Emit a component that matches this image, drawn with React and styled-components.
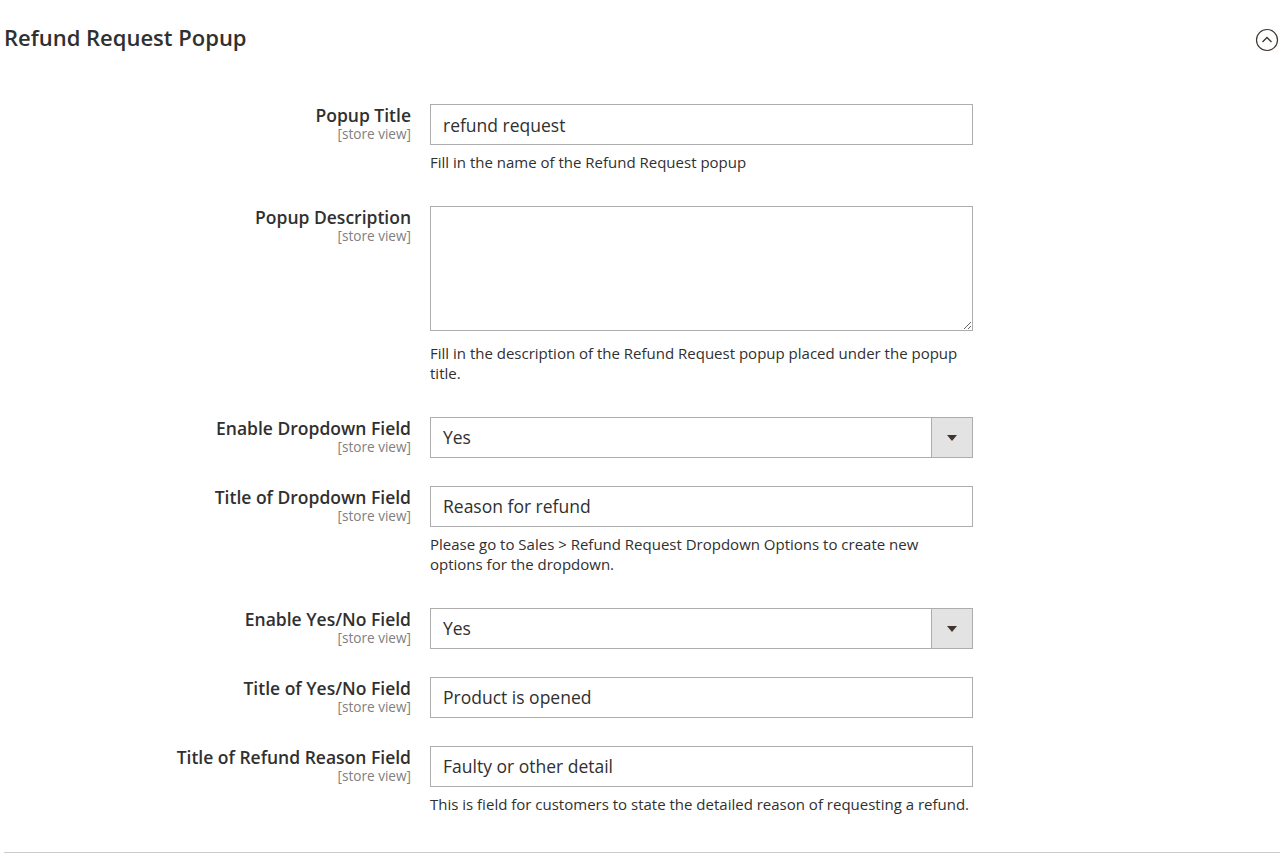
import React from "react";
import styled, { createGlobalStyle } from "styled-components";

const Global = createGlobalStyle`
  html, body { margin: 0; padding: 0; background: #fff; }
  body { font-family: "Open Sans", "Liberation Sans", sans-serif; color: #303030; }
  * { box-sizing: border-box; }
`;

const Section = styled.section`
  margin-left: 4px;
  border-bottom: 1px solid #cccccc;
  padding-bottom: 18px;
`;

const Header = styled.div`
  display: flex;
  align-items: center;
  justify-content: space-between;
  height: 78px;
`;

const Title = styled.h2`
  margin: 0 0 5px;
  font-size: 22px;
  line-height: 28px;
  font-weight: 600;
  color: #303030;
`;

const Toggle = styled.button`
  border: 0;
  background: none;
  padding: 0;
  width: 24px;
  height: 24px;
  display: flex;
  align-items: center;
  justify-content: center;
  margin-right: 1px;
  margin-top: 2px;
  cursor: pointer;
`;

const Form = styled.div`
  display: grid;
  grid-template-columns: 407px 543px;
  column-gap: 19px;
  padding-top: 12px;
`;

const Row = styled.div`
  display: contents;
`;

const LabelCell = styled.div`
  text-align: right;
  padding-top: 14px;
  padding-bottom: 14px;
`;

const Label = styled.div`
  font-size: 17.5px;
  font-weight: 600;
  line-height: 22px;
  color: #303030;
`;

const Scope = styled.div`
  font-size: 13.6px;
  line-height: 15px;
  color: #808080;
`;

const ValueCell = styled.div`
  padding-top: 14px;
  padding-bottom: ${(p) => (p.$hasNote ? 19 : 14)}px;
`;

const Input = styled.input`
  display: block;
  width: 543px;
  height: 41px;
  border: 1px solid #adadad;
  padding: 0 12px;
  font-family: "Open Sans", "Liberation Sans", sans-serif;
  font-size: 17.5px;
  color: #303030;
  outline: none;
  background: #fff;
`;

const TextArea = styled.textarea`
  display: block;
  width: 543px;
  height: 125px;
  margin-bottom: 12px;
  border: 1px solid #adadad;
  padding: 8px 12px;
  font-family: "Open Sans", "Liberation Sans", sans-serif;
  font-size: 17.5px;
  color: #303030;
  outline: none;
  resize: both;
`;

const SelectBox = styled.div`
  display: flex;
  width: 543px;
  height: 41px;
  border: 1px solid #adadad;
  background: #fff;
`;

const SelectValue = styled.div`
  flex: 1;
  display: flex;
  align-items: center;
  padding-left: 12px;
  font-size: 17.5px;
  color: #303030;
`;

const SelectArrow = styled.div`
  width: 41px;
  background: #e3e3e3;
  border-left: 1px solid #adadad;
  display: flex;
  align-items: center;
  justify-content: center;
  &::after {
    content: "";
    border-left: 5px solid transparent;
    border-right: 5px solid transparent;
    border-top: 6px solid #41362f;
    margin-top: 1px;
  }
`;

const Note = styled.div`
  margin-top: 7px;
  font-size: 15px;
  line-height: 20.6px;
  color: #303030;
  width: 543px;
`;

const fields = [
  { label: "Popup Title", type: "input", value: "refund request", note: "Fill in the name of the Refund Request popup" },
  { label: "Popup Description", type: "textarea", value: "", note: "Fill in the description of the Refund Request popup placed under the popup title." },
  { label: "Enable Dropdown Field", type: "select", value: "Yes" },
  { label: "Title of Dropdown Field", type: "input", value: "Reason for refund", note: "Please go to Sales > Refund Request Dropdown Options to create new options for the dropdown." },
  { label: "Enable Yes/No Field", type: "select", value: "Yes" },
  { label: "Title of Yes/No Field", type: "input", value: "Product is opened" },
  { label: "Title of Refund Reason Field", type: "input", value: "Faulty or other detail", note: "This is field for customers to state the detailed reason of requesting a refund." },
];

function Control({ f }) {
  if (f.type === "textarea") return <TextArea defaultValue={f.value} />;
  if (f.type === "select")
    return (
      <SelectBox>
        <SelectValue>{f.value}</SelectValue>
        <SelectArrow />
      </SelectBox>
    );
  return <Input defaultValue={f.value} />;
}

export default function App() {
  return (
    <>
      <Global />
      <Section>
        <Header>
          <Title>Refund Request Popup</Title>
          <Toggle aria-label="collapse">
            <svg width="24" height="24" viewBox="0 0 24 24">
              <circle cx="12" cy="12" r="10.5" fill="none" stroke="#41362f" strokeWidth="1.2" />
              <path d="M7.5 14 L12 9.6 L16.5 14" fill="none" stroke="#41362f" strokeWidth="1.4" />
            </svg>
          </Toggle>
        </Header>
        <Form>
          {fields.map((f) => (
            <Row key={f.label}>
              <LabelCell>
                <Label>{f.label}</Label>
                <Scope>[store view]</Scope>
              </LabelCell>
              <ValueCell $hasNote={!!f.note}>
                <Control f={f} />
                {f.note && <Note>{f.note}</Note>}
              </ValueCell>
            </Row>
          ))}
        </Form>
      </Section>
    </>
  );
}
